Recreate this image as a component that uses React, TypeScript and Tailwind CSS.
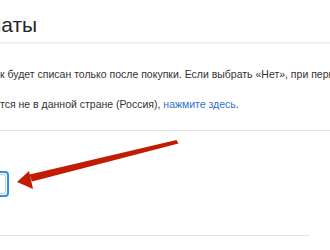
export default function App() {
  return (
    <div className="relative w-[330px] h-[250px] overflow-hidden bg-white text-[#333] font-['Liberation_Sans',Arial,sans-serif]">
      <div className="h-[44px] pt-[12px] border-b-2 border-[#efefef] overflow-hidden">
        <h1 className="ml-[-11px] text-[21px] leading-[25px] text-[#262626] whitespace-nowrap">латы</h1>
      </div>
      <div className="pt-[21px] text-[10.5px] leading-[18px] whitespace-nowrap overflow-hidden">
        <p>к будет списан только после покупки. Если выбрать «Нет», при перв</p>
        <p className="mt-[12px]">
          тся не в данной стране (Россия), <span className="text-[#2f72c9]">нажмите здесь</span>.
        </p>
      </div>
      <div className="mt-[17px] border-t border-[#e3e3e3]" />
      <div className="pt-[40px] pb-[38px]">
        <div className="ml-[-20px] w-[29px] h-[26px] rounded-[4px] border-2 border-[#2e8ff0] bg-white p-[1px]">
          <div className="h-full w-full rounded-[2px] border border-[#c8c8c8] flex items-center justify-end pr-[6px]">
            <span className="block w-[3px] h-[1px] bg-[#888]" />
          </div>
        </div>
      </div>
      <div className="w-[310px] border-t border-[#e3e3e3]" />
      <svg className="absolute left-0 top-0" width="330" height="250" viewBox="0 0 330 250">
        <path d="M176.5 140 L178.5 143.5 L32 181.5 L29.5 174.5 Z" fill="#c21d04" />
        <path d="M17 182 L29 171 L30.5 177.5 L33 189 Z" fill="#c21d04" />
      </svg>
    </div>
  )
}
